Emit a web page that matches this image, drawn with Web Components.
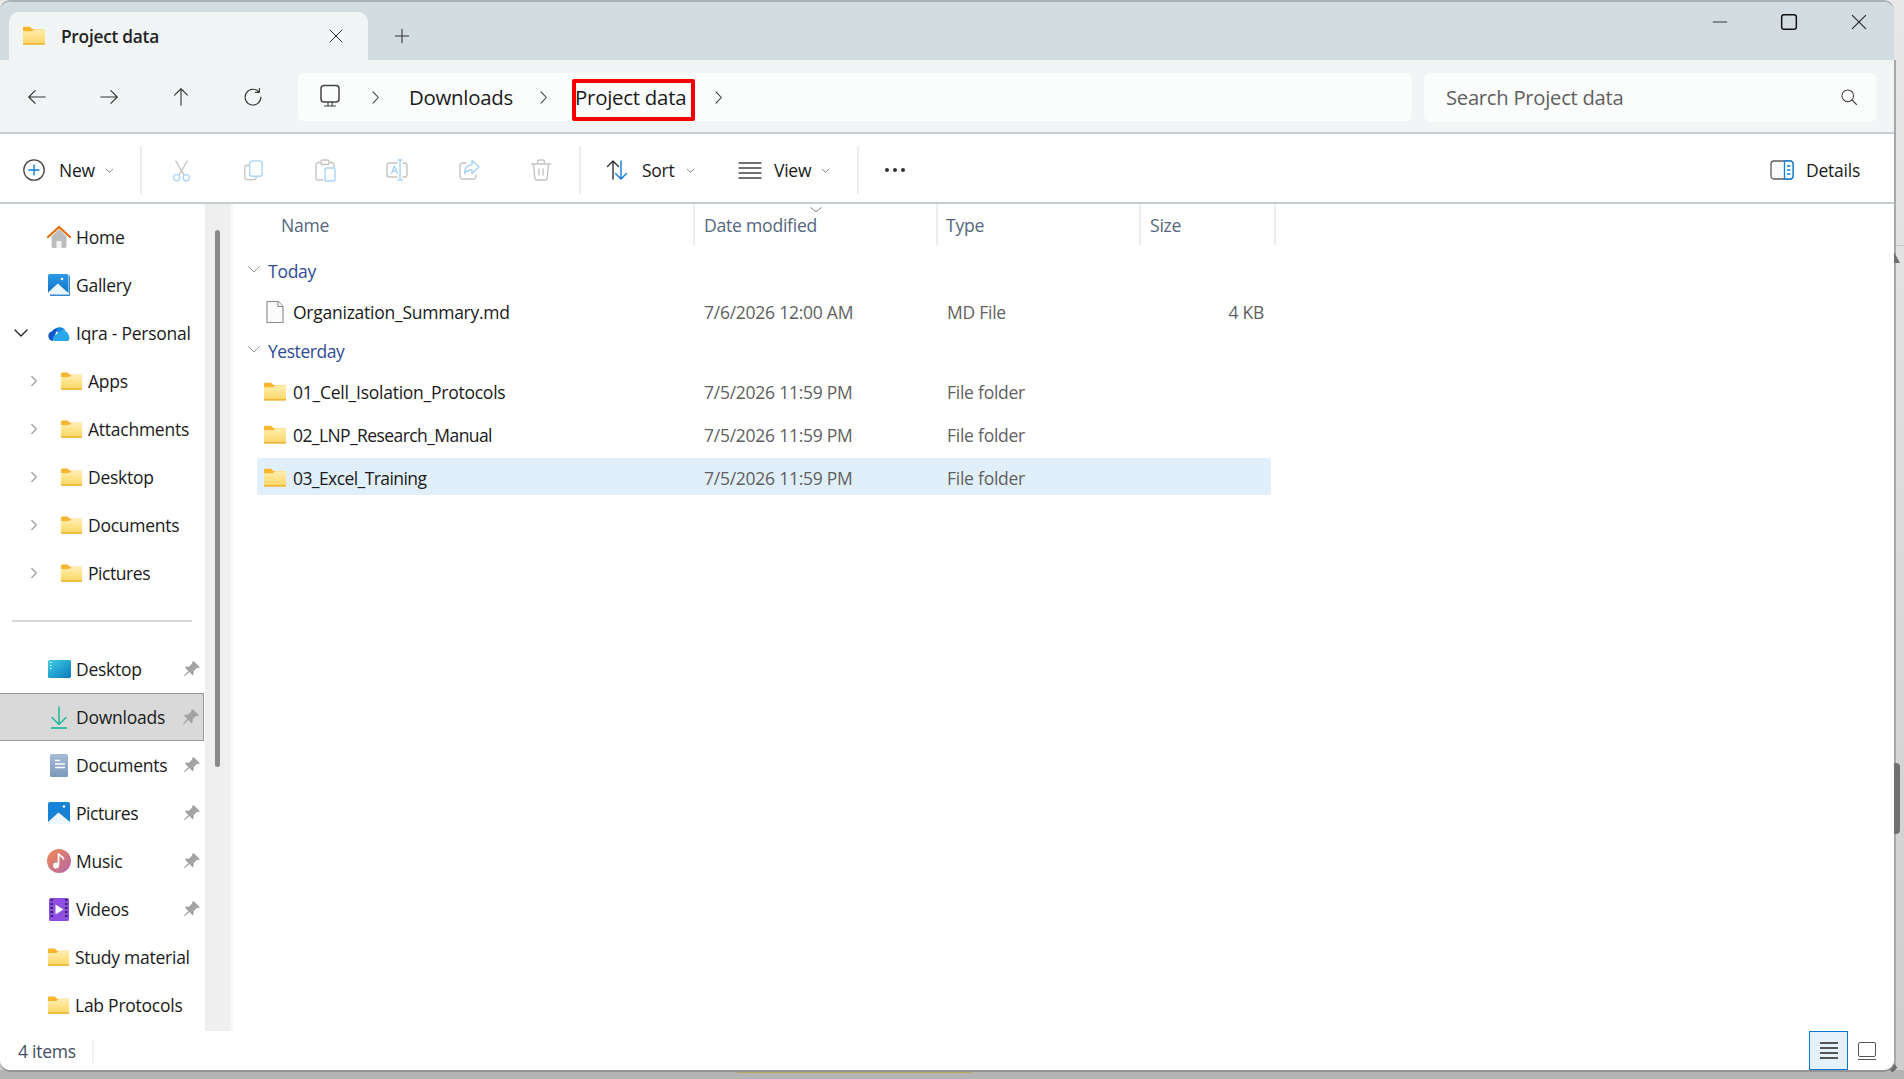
<!DOCTYPE html>
<html lang="en">
<head>
<meta charset="utf-8">
<title>Project data - File Explorer</title>
<style>
  html, body { margin: 0; height: 1079px; overflow: hidden; }
  body {
    background: linear-gradient(#e8e8e8, #cdcdcd);
    font-family: "Open Sans", "Noto Sans", "Liberation Sans", sans-serif;
    font-size: 17.5px;
    letter-spacing: -0.25px;
    color: #1a1a1a;
  }
</style>
</head>
<body>
<fx-backdrop></fx-backdrop>
<fx-window>
  <fx-titlebar title-text="Project data"></fx-titlebar>
  <fx-addressbar></fx-addressbar>
  <fx-toolbar></fx-toolbar>
  <fx-body>
    <fx-nav slot="nav">
      <fx-nav-item icon="home">Home</fx-nav-item>
      <fx-nav-item icon="gallery">Gallery</fx-nav-item>
      <fx-nav-item icon="onedrive" caret="open">Iqra - Personal</fx-nav-item>
      <fx-nav-item icon="folder" level="1" caret="closed">Apps</fx-nav-item>
      <fx-nav-item icon="folder" level="1" caret="closed">Attachments</fx-nav-item>
      <fx-nav-item icon="folder" level="1" caret="closed">Desktop</fx-nav-item>
      <fx-nav-item icon="folder" level="1" caret="closed">Documents</fx-nav-item>
      <fx-nav-item icon="folder" level="1" caret="closed" style="letter-spacing:-.45px">Pictures</fx-nav-item>
      <fx-nav-divider></fx-nav-divider>
      <fx-nav-item icon="desktop" pinned>Desktop</fx-nav-item>
      <fx-nav-item icon="download" pinned selected>Downloads</fx-nav-item>
      <fx-nav-item icon="documents" pinned>Documents</fx-nav-item>
      <fx-nav-item icon="pictures" pinned style="letter-spacing:-.45px">Pictures</fx-nav-item>
      <fx-nav-item icon="music" pinned>Music</fx-nav-item>
      <fx-nav-item icon="videos" pinned>Videos</fx-nav-item>
      <fx-nav-item icon="folder">Study material</fx-nav-item>
      <fx-nav-item icon="folder">Lab Protocols</fx-nav-item>
    </fx-nav>
    <fx-filelist slot="main">
      <fx-group-head style="height:40px;padding-bottom:3px">Today</fx-group-head>
      <fx-file-row style="height:40px" icon="file" date="7/6/2026 12:00 AM" type="MD File" size="4 KB">Organization_Summary.md</fx-file-row>
      <fx-group-head style="height:38px;letter-spacing:-.45px">Yesterday</fx-group-head>
      <fx-file-row icon="folder" date="7/5/2026 11:59 PM" type="File folder">01_Cell_Isolation_Protocols</fx-file-row>
      <fx-file-row icon="folder" date="7/5/2026 11:59 PM" type="File folder" name-tight>02_LNP_Research_Manual</fx-file-row>
      <fx-file-row icon="folder" date="7/5/2026 11:59 PM" type="File folder" name-tight selected>03_Excel_Training</fx-file-row>
    </fx-filelist>
  </fx-body>
  <fx-statusbar>4 items</fx-statusbar>
</fx-window>

<script>
const GREY = '#c4c4c4';
const BLUE = '#a8d4f6';
const LINE = 'fill="none" stroke-linecap="round" stroke-linejoin="round"';

const ICONS = {
  back: `<path d="M21 12H3M10 5l-7 7 7 7" ${LINE} stroke="#333" stroke-width="1.2"/>`,
  forward: `<path d="M3 12h18M14 5l7 7-7 7" ${LINE} stroke="#333" stroke-width="1.2"/>`,
  up: `<path d="M12 21V3M5 10l7-7 7 7" ${LINE} stroke="#333" stroke-width="1.2"/>`,
  refresh: `<path d="M18.5 6.5A8.6 8.6 0 1 0 20.6 12M19 2.5v4.4h-4.4" ${LINE} stroke="#333" stroke-width="1.2"/>`,
  monitor: `<rect x="3" y="1.5" width="18" height="16.5" rx="3" ${LINE} stroke="#444" stroke-width="1.5"/><path d="M10 18v3.500M14 18v3.500M6.500 22h11" ${LINE} stroke="#444" stroke-width="1.2"/>`,
  chevron: `<path d="M8.500 4l7.500 8-7.500 8" ${LINE} stroke="#333" stroke-width="1.500"/>`,
  search: `<circle cx="10.5" cy="10.5" r="7" ${LINE} stroke="#444" stroke-width="1.3"/><path d="M15.6 15.6L21 21" ${LINE} stroke="#444" stroke-width="1.3"/>`,
  close: `<path d="M4 4l16 16M20 4L4 20" ${LINE} stroke="#222" stroke-width="1.3"/>`,
  plus: `<path d="M12 4v16M4 12h16" ${LINE} stroke="#333" stroke-width="1.3"/>`,
  minimize: `<path d="M3 12h18" ${LINE} stroke="#222" stroke-width="1.2"/>`,
  maximize: `<rect x="4" y="4" width="16" height="16" rx="2.5" ${LINE} stroke="#111" stroke-width="1.6"/>`,
  new: `<circle cx="12" cy="12" r="10.2" ${LINE} stroke="#444" stroke-width="1.3"/><path d="M12 7v10M7 12h10" ${LINE} stroke="#0f7bd4" stroke-width="1.4"/>`,
  cut: `<path d="M6 2l8.2 14M18 2L9.8 16" ${LINE} stroke="${GREY}" stroke-width="1.3"/><circle cx="7" cy="19.5" r="3.2" ${LINE} stroke="${BLUE}" stroke-width="1.3"/><circle cx="17" cy="19.5" r="3.2" ${LINE} stroke="${BLUE}" stroke-width="1.3"/>`,
  copy: `<path d="M7 6.5H5.5A2.5 2.5 0 0 0 3 9v10a2.5 2.5 0 0 0 2.5 2.5h7A2.5 2.5 0 0 0 15 19.4" ${LINE} stroke="${GREY}" stroke-width="1.4"/><rect x="8" y="2" width="13" height="16" rx="3" ${LINE} stroke="${BLUE}" stroke-width="1.4"/>`,
  paste: `<path d="M7 4.5H5.5A2.5 2.5 0 0 0 3 7v13a2 2 0 0 0 2 2h5M17 4.5h1.5A2.5 2.5 0 0 1 21 7v2" ${LINE} stroke="${GREY}" stroke-width="1.4"/><rect x="8" y="2" width="8" height="4.5" rx="1.5" ${LINE} stroke="${GREY}" stroke-width="1.4"/><rect x="12" y="10" width="10" height="13" rx="2" ${LINE} stroke="${BLUE}" stroke-width="1.4"/>`,
  rename: `<path d="M12 5H4.5A2.5 2.5 0 0 0 2 7.5v9A2.5 2.5 0 0 0 4.5 19H12M18 5h1.5A2.5 2.5 0 0 1 22 7.5v9a2.5 2.5 0 0 1-2.5 2.5H18" ${LINE} stroke="${GREY}" stroke-width="1.4"/><path d="M6.5 15.5L9.5 8l3 7.5M7.5 13h4" ${LINE} stroke="${BLUE}" stroke-width="1.3"/><path d="M15 2v20M13 2h4M13 22h4" ${LINE} stroke="${BLUE}" stroke-width="1.4"/>`,
  share: `<path d="M9 5H5.5A2.5 2.5 0 0 0 3 7.5v11A2.5 2.5 0 0 0 5.5 21h11a2.5 2.5 0 0 0 2.5-2.5V17" ${LINE} stroke="${GREY}" stroke-width="1.4"/><path d="M15 2.5l7 6.5-7 6.5v-3.8c-3.5 0-5.5 1-7.5 4 0-5 2.5-8.5 7.5-9z" ${LINE} stroke="${BLUE}" stroke-width="1.4"/>`,
  delete: `<path d="M2.5 6h19M8.5 6V4a2 2 0 0 1 2-2h3a2 2 0 0 1 2 2v2M4.5 6l1.3 14a2.2 2.2 0 0 0 2.2 2h8a2.2 2.2 0 0 0 2.2-2l1.3-14M10 11v6M14 11v6" ${LINE} stroke="${GREY}" stroke-width="1.4"/>`,
  sort: `<path d="M8 21V3M2.5 8.5L8 3l5.5 5.5" ${LINE} stroke="#333" stroke-width="1.4"/><path d="M16 3v18M10.5 15.5L16 21l5.5-5.5" ${LINE} stroke="#0f7bd4" stroke-width="1.4"/>`,
  view: `<path d="M1 5h22M1 10h22M1 15h22M1 20h22" ${LINE} stroke="#444" stroke-width="1.3"/>`,
  more: `<circle cx="4" cy="12" r="2" fill="#333"/><circle cx="12" cy="12" r="2" fill="#333"/><circle cx="20" cy="12" r="2" fill="#333"/>`,
  details: `<rect x="1" y="3" width="22" height="18" rx="3" fill="#f8f9fa" stroke="#5d5d5d" stroke-width="1.3"/><path d="M14.5 3H20a3 3 0 0 1 3 3v12a3 3 0 0 1-3 3h-5.5z" fill="#fff" stroke="#1380d8" stroke-width="1.3"/><path d="M17 8h3.5M17 12h3.5M17 16h3.5" stroke="#1380d8" stroke-width="1.4"/>`,
  dropdown: `<path d="M6 9.5l6 6 6-6" ${LINE} stroke="#666" stroke-width="1.5"/>`,
  caretdown: `<path d="M3 7.500l9 9 9-9" ${LINE} stroke="#222" stroke-width="2"/>`,
  caretright: `<path d="M8 4l8 8-8 8" ${LINE} stroke="#999" stroke-width="1.9"/>`,
  groupcaret: `<path d="M3 8l9 9 9-9" ${LINE} stroke="#6c7680" stroke-width="1.4"/>`,
  sortcaret: `<path d="M3 8l9 7 9-7" ${LINE} stroke="#777" stroke-width="1.6"/>`,
  file: `<path d="M4 1.5h11l5 5v16H4z" fill="#fbfbfb" stroke="#8a8a8a" stroke-width="1.1" stroke-linejoin="round"/><path d="M15 1.5v5h5" fill="#fff" stroke="#8a8a8a" stroke-width="1.1" stroke-linejoin="round"/>`,
  folder: `<defs><linearGradient id="f" x1="0" y1="0" x2="0" y2="1"><stop offset="0" stop-color="#ffeeb0"/><stop offset="1" stop-color="#ffd765"/></linearGradient></defs><path d="M1 3.5A.8.8 0 0 1 1.800 2.700H8l2.300 2.200H23v15.400H1z" fill="#f7b62e"/><path d="M1 7.200h9l2.300-2H23v15H1z" fill="url(#f)"/><path d="M1 19.200h22v1.200H1z" fill="#eaa928"/>`,
  home: `<path d="M4.500 11.500V21a2 2 0 0 0 2 2h11a2 2 0 0 0 2-2v-9.500L12 4z" fill="#bdbdbd"/><path d="M9.500 23v-7h5v7z" fill="#f3f3f3"/><path d="M1 12L12 2l11 10" fill="none" stroke="#e36c0a" stroke-width="2.200" stroke-linejoin="round" stroke-linecap="round"/>`,
  gallery: `<defs><linearGradient id="g" x1="0" y1="0" x2="0" y2="1"><stop offset="0" stop-color="#2c9be6"/><stop offset="1" stop-color="#0f6fc4"/></linearGradient></defs><path d="M22 2.500h1v19.500a1 1 0 0 1-1 1H3v-1.500h19z" fill="#3a88cc"/><rect x="1" y="1" width="20.500" height="20" rx="1.800" fill="url(#g)"/><path d="M1 19.500l9.800-9 10.700 9.500v1H1z" fill="#e9f4fb"/><circle cx="15" cy="6" r="1.300" fill="#fff"/>`,
  onedrive: `<path d="M6 20a5 5 0 0 1-1-9.800A7 7 0 0 1 15 8c-4 0-6 3-7 6l-2 6z" fill="#1257c9"/><path d="M7 20c-2-2-.8-6 3-7a6.500 6.500 0 0 1 12 2 4.500 4.500 0 0 1-1 5z" fill="#28a8ea"/><path d="M9 7.500A7 7 0 0 1 19 10c-3-1-6 0-8 2z" fill="#0f88dc"/>`,
  desktop: `<defs><linearGradient id="d" x1="0" y1="0" x2="1" y2="1"><stop offset="0" stop-color="#3fd0e6"/><stop offset="1" stop-color="#0a78bd"/></linearGradient></defs><rect x="1" y="3" width="23" height="18" rx="1.500" fill="url(#d)"/><path d="M3 5.500h1.500M3 8.500h1.500M3 11.500h1.500" stroke="#fff" stroke-width="1.200"/>`,
  download: `<path d="M12 2v17M5 12.500l7 7 7-7" ${LINE} stroke="#1fb89b" stroke-width="1.500"/><path d="M4 23h16" stroke="#1fb89b" stroke-width="1.700"/>`,
  documents: `<defs><linearGradient id="o" x1="0" y1="0" x2="0" y2="1"><stop offset="0" stop-color="#a6bcd6"/><stop offset="1" stop-color="#7b98bb"/></linearGradient></defs><rect x="3" y="1" width="18" height="23" rx="1.500" fill="url(#o)"/><path d="M8 7.500h5M8 11h10M8 14.500h10" stroke="#fff" stroke-width="1.300"/>`,
  pictures: `<rect x="1" y="1" width="22" height="22" rx="2" fill="#1783d8"/><path d="M1 21l10.500-9.500L23 21v.500a1.500 1.500 0 0 1-1.500 1.500h-19A1.500 1.500 0 0 1 1 21.500z" fill="#eef6fc"/><circle cx="17" cy="5.500" r="1.300" fill="#fff"/>`,
  music: `<defs><linearGradient id="m" x1="0" y1="0" x2="1" y2="1"><stop offset="0" stop-color="#f28a4d"/><stop offset="1" stop-color="#b466ad"/></linearGradient></defs><circle cx="12" cy="12" r="12" fill="url(#m)"/><path d="M11.500 5v11" stroke="#fff" stroke-width="1.700"/><path d="M11.500 5c1.500 2.500 4.500 2.500 5 5" ${LINE} stroke="#fff" stroke-width="1.700"/><circle cx="9" cy="16.500" r="3" fill="#fff"/>`,
  videos: `<rect x="2" y="1" width="20" height="23" rx="1.500" fill="#8e4fe0"/><path d="M8.500 7.500l8 5-8 5z" fill="#fff"/><path d="M3.500 3h2.500M3.500 7h2.500M3.500 11h2.500M3.500 15h2.500M3.500 19h2.500M18 3h2.500M18 7h2.500M18 11h2.500M18 15h2.500M18 19h2.500" stroke="#3d2278" stroke-width="2.200"/>`,
  pin: `<path d="M14.500 1.500l8 8-2 1.500-2-.300-4.500 4.500c.500 2.500 0 4-1 5.300l-4.500-4.500L3 21l-2 1 1-2 5-5.500L2.500 10c1.300-1 2.800-1.500 5.300-1l4.500-4.500-.300-2z" fill="#a3a3a3"/>`
};

function icon(name, size) {
  return `<svg xmlns="http://www.w3.org/2000/svg" viewBox="0 0 24 24" width="${size}" height="${size}" aria-hidden="true">${ICONS[name]}</svg>`;
}

class FxBackdrop extends HTMLElement {
  constructor() {
    super();
    this.attachShadow({ mode: 'open' });
    this.shadowRoot.innerHTML = `
      <style>
        :host { display: block; }
        .floor { position: absolute; left: 0; top: 1070px; width: 1904px; height: 9px; background: #b4b4b4; }
        .accent { position: absolute; left: 737px; top: 1070px; width: 236px; height: 3px; background: #b5ac5b; }
        .corner { position: absolute; left: 1894px; top: 252px; width: 0; height: 0;
          border-left: 6px solid #6f6f6f; border-top: 11px solid transparent; }
        .line { position: absolute; left: 1896px; top: 245px; width: 8px; height: 1px; background: #c8c8c8; }
        .thumb { position: absolute; left: 1894px; top: 763px; width: 6px; height: 71px;
          background: #707070; border-radius: 0 4px 4px 0; }
        .edge { position: absolute; left: 1894px; top: 60px; width: 2px; height: 1010px; background: #a8a8a8; }
        .nub { position: absolute; left: 1889px; top: 1064px; width: 7px; height: 7px;
          background: #6b6b6b; transform: rotate(45deg); }
      </style>
      <div class="floor"></div>
      <div class="accent"></div>
      <div class="edge"></div>
      <div class="line"></div>
      <div class="corner"></div>
      <div class="thumb"></div>
      <div class="nub"></div>
    `;
  }
}

class FxWindow extends HTMLElement {
  constructor() {
    super();
    this.attachShadow({ mode: 'open' });
    this.shadowRoot.innerHTML = `
      <style>
        :host {
          display: flex;
          flex-direction: column;
          position: relative;
          width: 1894px;
          height: 1068px;
          margin-top: 2px;
          background: #fff;
          border-radius: 10px;
          overflow: hidden;
          box-shadow: 0 -2px 0 #a9b4b4, 0 2px 0 #949494;
        }
      </style>
      <slot></slot>
    `;
  }
}

class FxTitlebar extends HTMLElement {
  constructor() {
    super();
    this.attachShadow({ mode: 'open' });
  }

  connectedCallback() {
    this.shadowRoot.innerHTML = `
      <style>
        :host {
          display: flex;
          align-items: flex-end;
          height: 58px;
          flex: none;
          background: #d3dde1;
          padding-left: 9px;
        }
        .tab {
          display: flex;
          align-items: center;
          box-sizing: border-box;
          width: 359px;
          height: 48px;
          padding: 0 23px 0 13px;
          background: #f2f5f6;
          border-radius: 10px 10px 0 0;
        }
        .tab svg { flex: none; }
        .name { flex: 1; margin-left: 15px; font-weight: 600; font-size: 17.3px; color: #222; }
        .add { display: flex; margin: 0 0 14px 24px; }
        .controls { display: flex; align-items: center; margin: 0 25px 27px auto; }
        .controls span { display: flex; justify-content: center; }
        .min { width: 20px; margin-right: 48px; }
        .max { width: 22px; margin-right: 49px; }
        .cls { width: 20px; }
      </style>
      <div class="tab">
        ${icon('folder', 24)}
        <span class="name">${this.getAttribute('title-text')}</span>
        ${icon('close', 18)}
      </div>
      <div class="add">${icon('plus', 20)}</div>
      <div class="controls">
        <span class="min">${icon('minimize', 18)}</span>
        <span class="max">${icon('maximize', 22)}</span>
        <span class="cls">${icon('close', 20)}</span>
      </div>
    `;
  }
}

class FxAddressbar extends HTMLElement {
  constructor() {
    super();
    this.attachShadow({ mode: 'open' });
    this.shadowRoot.innerHTML = `
      <style>
        :host {
          display: flex;
          align-items: center;
          flex: none;
          box-sizing: border-box;
          height: 74px;
          padding: 2px 17px 0 1px;
          background: #f2f5f6;
          border-bottom: 2px solid #c5cfd2;
        }
        .nav { display: flex; width: 72px; justify-content: center; flex: none; }
        .crumbs {
          display: flex;
          align-items: flex-end;
          box-sizing: border-box;
          width: 1114px;
          height: 48px;
          margin-left: 9px;
          padding-left: 20px;
          background: #fbfcfc;
          border-radius: 6px;
          font-size: 20.4px;
        }
        .crumbs > * { box-sizing: border-box; height: 42px; padding-bottom: 6px; display: flex; align-items: center; flex: none; }
        .chev { justify-content: center; width: 24px; }
        .pc { width: 24px; margin-right: 21px; padding-bottom: 9px !important; }
        .down { margin: 0 18px 0 22px; color: #1a1a1a; }
        .current {
          width: 123px;
          margin-left: 17px;
          padding-left: 3px;
          margin-right: 11px;
          border-radius: 2px;
          box-shadow: inset 0 0 0 4px #f40000;
          color: #1a1a1a;
        }
        .search {
          display: flex;
          align-items: center;
          justify-content: space-between;
          box-sizing: border-box;
          width: 453px;
          height: 49px;
          margin-left: 12px;
          padding: 0 18px 0 22px;
          background: #fbfcfc;
          border-radius: 7px;
          font-size: 20.2px;
          color: #5f5f5f;
        }
      </style>
      <span class="nav">${icon('back', 22)}</span>
      <span class="nav">${icon('forward', 22)}</span>
      <span class="nav">${icon('up', 22)}</span>
      <span class="nav">${icon('refresh', 22)}</span>
      <div class="crumbs">
        <span class="pc">${icon('monitor', 24)}</span>
        <span class="chev">${icon('chevron', 17)}</span>
        <span class="down">Downloads</span>
        <span class="chev">${icon('chevron', 17)}</span>
        <span class="current">Project data</span>
        <span class="chev">${icon('chevron', 17)}</span>
      </div>
      <div class="search">
        <span>Search Project data</span>
        ${icon('search', 20)}
      </div>
    `;
  }
}

class FxToolbar extends HTMLElement {
  constructor() {
    super();
    this.attachShadow({ mode: 'open' });
    this.shadowRoot.innerHTML = `
      <style>
        :host {
          display: flex;
          align-items: center;
          flex: none;
          box-sizing: border-box;
          height: 70px;
          padding: 4px 34px 0 22px;
          background: #fff;
          border-bottom: 2px solid #c5cfd2;
          font-size: 17.5px;
        }
        .btn { display: flex; align-items: center; flex: none; }
        .plain { justify-content: center; width: 72px; }
        .sep { flex: none; width: 2px; height: 48px; background: #ececec; }
        .new { width: 118px; }
        .new span { margin: 0 8px 0 13px; }
        .sort { width: 132px; margin-left: 24px; }
        .sort span { margin: 0 9px 0 13px; }
        .view { width: 119px; margin-left: 1px; }
        .view span { margin: 0 8px 0 12px; }
        .tools { display: flex; margin: 0 0 0 3px; }
        .more { margin-left: 24px; }
        .details { margin-left: auto; }
        .details span { margin-left: 12px; }
      </style>
      <div class="btn new">${icon('new', 24)}<span>New</span>${icon('dropdown', 13)}</div>
      <div class="sep"></div>
      <div class="tools">
        <div class="btn plain">${icon('cut', 23)}</div>
        <div class="btn plain">${icon('copy', 23)}</div>
        <div class="btn plain">${icon('paste', 24)}</div>
        <div class="btn plain">${icon('rename', 24)}</div>
        <div class="btn plain">${icon('share', 24)}</div>
        <div class="btn plain">${icon('delete', 24)}</div>
      </div>
      <div class="sep" style="margin-left:2px"></div>
      <div class="btn sort">${icon('sort', 24)}<span>Sort</span>${icon('dropdown', 13)}</div>
      <div class="btn view">${icon('view', 24)}<span>View</span>${icon('dropdown', 13)}</div>
      <div class="sep"></div>
      <div class="btn more">${icon('more', 24)}</div>
      <div class="btn details">${icon('details', 24)}<span>Details</span></div>
    `;
  }
}

class FxBody extends HTMLElement {
  constructor() {
    super();
    this.attachShadow({ mode: 'open' });
    this.shadowRoot.innerHTML = `
      <style>
        :host { display: flex; flex: 1; min-height: 0; }
        ::slotted([slot="nav"]) { flex: none; }
        ::slotted([slot="main"]) { flex: 1; }
        .gutter {
          flex: none;
          box-sizing: border-box;
          width: 28px;
          padding: 26px 0 0 10px;
          background: linear-gradient(90deg, #efefef 25px, #f7f7f7 25px);
        }
        .thumb { width: 5px; height: 537px; border-radius: 3px; background: #8a8a8a; }
      </style>
      <slot name="nav"></slot>
      <div class="gutter"><div class="thumb"></div></div>
      <slot name="main"></slot>
    `;
  }
}

class FxNav extends HTMLElement {
  constructor() {
    super();
    this.attachShadow({ mode: 'open' });
    this.shadowRoot.innerHTML = `
      <style>
        :host { display: block; box-sizing: border-box; width: 205px; padding-top: 9px; overflow: hidden; }
      </style>
      <slot></slot>
    `;
  }
}

class FxNavDivider extends HTMLElement {
  constructor() {
    super();
    this.attachShadow({ mode: 'open' });
    this.shadowRoot.innerHTML = `
      <style>
        :host { display: flex; align-items: center; height: 48px; padding: 0 13px 0 12px; }
        div { flex: 1; height: 2px; background: #d6d6d6; }
      </style>
      <div></div>
    `;
  }
}

class FxNavItem extends HTMLElement {
  constructor() {
    super();
    this.attachShadow({ mode: 'open' });
  }

  connectedCallback() {
    const indent = this.getAttribute('level') === '1';
    const caret = this.getAttribute('caret');
    const caretIcon = caret === 'open' ? icon('caretdown', 16) : caret === 'closed' ? icon('caretright', 14) : '';
    this.shadowRoot.innerHTML = `
      <style>
        :host {
          display: flex;
          align-items: center;
          box-sizing: border-box;
          width: 204px;
          height: 48px;
          white-space: nowrap;
        }
        :host([selected]) { background: #d9d9d9; border: 1px solid #999; border-left: 0; }
        .lead { flex: none; display: flex; align-items: center; width: ${indent ? 60 : 47}px; padding-left: ${indent ? 27 : 13}px; box-sizing: border-box; }
        .glyph { flex: none; display: flex; margin-right: 5px; }
        .pin { display: flex; margin-left: auto; margin-right: 3px; }
      </style>
      <span class="lead">${caretIcon}</span>
      <span class="glyph">${icon(this.getAttribute('icon'), indent || this.getAttribute('icon') === 'folder' ? 23 : 24)}</span>
      <slot></slot>
      ${this.hasAttribute('pinned') ? `<span class="pin">${icon('pin', 18)}</span>` : ''}
    `;
  }
}

class FxFilelist extends HTMLElement {
  constructor() {
    super();
    this.attachShadow({ mode: 'open' });
    this.shadowRoot.innerHTML = `
      <style>
        :host { display: block; min-width: 0; }
        .head {
          display: grid;
          grid-template-columns: 462px 243px 203px 135px;
          height: 41px;
          color: #55667c;
          font-size: 17.6px;
        }
        .head div {
          position: relative;
          display: flex;
          align-items: center;
          box-sizing: border-box;
          border-right: 2px solid #ededed;
        }
        .head .name { padding-left: 48px; }
        .head .date { padding-left: 9px; }
        .head .type { padding-left: 8px; }
        .head .size { padding-left: 9px; }
        .mark { position: absolute; left: 114px; top: -1px; display: flex; }
        .rows { padding-top: 7px; }
      </style>
      <div class="head">
        <div class="name">Name</div>
        <div class="date">Date modified<span class="mark">${icon('sortcaret', 14)}</span></div>
        <div class="type">Type</div>
        <div class="size">Size</div>
      </div>
      <div class="rows"><slot></slot></div>
    `;
  }
}

class FxGroupHead extends HTMLElement {
  constructor() {
    super();
    this.attachShadow({ mode: 'open' });
    this.shadowRoot.innerHTML = `
      <style>
        :host {
          display: flex;
          align-items: center;
          box-sizing: border-box;
          padding: 0 0 1px 14px;
          color: #2f4b94;
        }
        span { display: flex; margin: -3px 7px 0 0; }
      </style>
      <span>${icon('groupcaret', 14)}</span>
      <slot></slot>
    `;
  }
}

class FxFileRow extends HTMLElement {
  constructor() {
    super();
    this.attachShadow({ mode: 'open' });
  }

  connectedCallback() {
    this.shadowRoot.innerHTML = `
      <style>
        :host { display: block; height: 43px; }
        .row {
          display: grid;
          grid-template-columns: 447px 243px 203px 120px;
          align-items: center;
          box-sizing: border-box;
          width: 1014px;
          height: 100%;
          margin-left: 24px;
          color: #5f5f5f;
        }
        :host([selected]) .row { position: relative; }
        :host([selected]) .row::before {
          content: "";
          position: absolute;
          inset: 2px 0 4px 0;
          background: #e1effb;
          border-radius: 2px;
        }
        .cell { position: relative; white-space: nowrap; }
        .name { display: flex; align-items: center; color: #1a1a1a; padding-left: 6px; }
        .name svg { flex: none; margin-right: 6px; }
        :host([name-tight]) .name { letter-spacing: -0.58px; }
        .size { text-align: right; padding-right: 6px; }
      </style>
      <div class="row">
        <div class="cell name">${icon(this.getAttribute('icon'), 24)}<slot></slot></div>
        <div class="cell">${this.getAttribute('date')}</div>
        <div class="cell">${this.getAttribute('type')}</div>
        <div class="cell size">${this.getAttribute('size') || ''}</div>
      </div>
    `;
  }
}

class FxStatusbar extends HTMLElement {
  constructor() {
    super();
    this.attachShadow({ mode: 'open' });
    this.shadowRoot.innerHTML = `
      <style>
        :host {
          display: flex;
          align-items: center;
          flex: none;
          height: 39px;
          background: #fff;
          color: #3f4e60;
        }
        .count { box-sizing: border-box; width: 94px; padding-left: 18px; border-right: 2px solid #f1f1f1; }
        .views { display: flex; align-items: center; height: 100%; margin-left: auto; margin-right: 18px; }
        .list {
          display: flex;
          flex-direction: column;
          justify-content: center;
          gap: 3px;
          box-sizing: border-box;
          width: 39px;
          height: 39px;
          padding: 0 9px 0 10px;
          background: #e5f1fb;
          border: 1px solid #0078d4;
        }
        .list i { display: block; height: 2px; background: #555; }
        .tiles { margin-left: 10px; width: 18px; }
        .tiles b { display: block; box-sizing: border-box; height: 15px; border: 1.5px solid #555; border-radius: 2px; }
        .tiles i { display: block; height: 1px; margin-top: 2px; background: #555; }
      </style>
      <div class="count"><slot></slot></div>
      <div class="views">
        <div class="list"><i></i><i></i><i></i><i></i></div>
        <div class="tiles"><b></b><i></i></div>
      </div>
    `;
  }
}

customElements.define('fx-backdrop', FxBackdrop);
customElements.define('fx-window', FxWindow);
customElements.define('fx-titlebar', FxTitlebar);
customElements.define('fx-addressbar', FxAddressbar);
customElements.define('fx-toolbar', FxToolbar);
customElements.define('fx-body', FxBody);
customElements.define('fx-nav', FxNav);
customElements.define('fx-nav-divider', FxNavDivider);
customElements.define('fx-nav-item', FxNavItem);
customElements.define('fx-filelist', FxFilelist);
customElements.define('fx-group-head', FxGroupHead);
customElements.define('fx-file-row', FxFileRow);
customElements.define('fx-statusbar', FxStatusbar);
</script>
</body>
</html>
